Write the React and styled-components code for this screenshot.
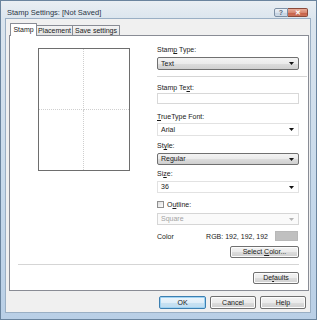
import React from 'react'
import styled, {createGlobalStyle} from "styled-components";

const Global = createGlobalStyle`
    html, body {
        margin: 0;
        padding: 0;
        background: #ffffff;
    }
    * {
        box-sizing: border-box;
    }
`;

const Window = styled.div`
    width: 317px;
    height: 320px;
    display: flex;
    flex-direction: column;
    padding: 0 5px 6px 4px;
    border: 1px solid #6a849e;
    background: linear-gradient(to bottom, #e9eef3 0, #dbe5ee 18px, #c6d9eb 60%, #b9cfe6 100%);
    font-family: "Liberation Sans", Arial, sans-serif;
    font-size: 7px;
    color: #1a1a1a;
`;

const TitleBar = styled.div`
    height: 17px;
    flex-shrink: 0;
    display: flex;
    justify-content: space-between;
    align-items: flex-start;
`;

const Title = styled.span`
    margin: 7px 0 0 2px;
    font-size: 7.5px;
    line-height: 9px;
    color: #2a3646;
`;

const CaptionButtons = styled.div`
    display: flex;
    margin: 7px 3px 0 0;
`;

const CaptionButton = styled.div`
    width: ${p => p.$w}px;
    height: 9px;
    display: flex;
    align-items: center;
    justify-content: center;
    border: 1px solid ${p => p.$close ? '#8a4a3a' : '#7d90a5'};
    border-radius: ${p => p.$close ? '0 2px 2px 0' : '2px 0 0 2px'};
    background: ${p => p.$close
        ? 'linear-gradient(to bottom, #e9ad9b 0, #d88a73 50%, #c76048 51%, #cc735a 100%)'
        : 'linear-gradient(to bottom, #edf2f7 0, #dbe4ee 50%, #c4d2e1 51%, #cfdbe8 100%)'};
    color: ${p => p.$close ? '#ffffff' : '#56687c'};
    font-size: 7px;
    font-weight: bold;
    line-height: 1;
    & + & {
        border-left: none;
    }
`;

const Client = styled.div`
    flex: 1;
    display: flex;
    flex-direction: column;
    padding: 4px 1px 0 3px;
    background: #f0f0f0;
    border: 1px solid #9aafc4;
`;

const TabRow = styled.div`
    height: 12px;
    display: flex;
    align-items: flex-end;
    padding-left: 1px;
    flex-shrink: 0;
`;

const Tab = styled.div`
    width: ${p => p.$w}px;
    height: ${p => p.$active ? 13 : 10}px;
    margin-bottom: ${p => p.$active ? -1 : 0}px;
    position: relative;
    z-index: ${p => p.$active ? 1 : 0};
    display: flex;
    align-items: center;
    justify-content: center;
    border: 1px solid #898c95;
    border-bottom: none;
    border-radius: 1px 1px 0 0;
    background: ${p => p.$active ? '#ffffff' : 'linear-gradient(to bottom, #f4f4f4, #e4e4e4)'};
    line-height: 8px;
    white-space: nowrap;
    & + & {
        margin-left: ${p => p.$active ? 0 : -1}px;
    }
`;

const Panel = styled.div`
    height: 256px;
    flex-shrink: 0;
    display: flex;
    flex-direction: column;
    padding: 9px 9px 5px 8px;
    background: #ffffff;
    border: 1px solid #898c95;
`;

const TopRow = styled.div`
    display: flex;
`;

const PreviewCol = styled.div`
    width: 139px;
    flex-shrink: 0;
`;

const Preview = styled.div`
    width: 92px;
    height: 123px;
    margin: 3px 0 0 20px;
    border: 1px solid #6e6e6e;
    display: grid;
    grid-template-columns: 1fr 1fr;
    grid-template-rows: 1fr 1fr;
`;

const Quarter = styled.div`
    border-right: ${p => p.$right ? '1px dotted #cfcfcf' : 'none'};
    border-bottom: ${p => p.$bottom ? '1px dotted #cfcfcf' : 'none'};
`;

const FormCol = styled.div`
    width: 142px;
    display: flex;
    flex-direction: column;
`;

const Label = styled.div`
    height: 9px;
    line-height: 9px;
    margin-top: ${p => p.$mt || 0}px;
    white-space: nowrap;
`;

const Select = styled.div`
    height: ${p => p.$h || 12}px;
    margin-top: ${p => p.$mt || 0}px;
    display: flex;
    align-items: center;
    justify-content: space-between;
    padding: 0 4px 0 3px;
    border: 1px solid ${p => p.$variant === 'button' ? '#707070' : p.$variant === 'disabled' ? '#d6d6d6' : '#e2e2e2'};
    border-radius: ${p => p.$variant === 'button' ? 2 : 0}px;
    background: ${p => p.$variant === 'button'
        ? 'linear-gradient(to bottom, #f3f3f3 0, #ebebeb 50%, #dddddd 51%, #cfcfcf 100%)'
        : p.$variant === 'disabled' ? '#fafafa' : '#ffffff'};
    color: ${p => p.$variant === 'disabled' ? '#a3a3a3' : '#1a1a1a'};
    line-height: 8px;
`;

const Arrow = ({color}) => (
    <svg width="5" height="3" viewBox="0 0 5 3">
        <polygon points="0,0 5,0 2.5,3" fill={color || '#111'}/>
    </svg>
);

const TextBox = styled.div`
    height: 11px;
    margin-top: ${p => p.$mt || 0}px;
    border: 1px solid #d8d8d8;
    background: #ffffff;
`;

const Separator = styled.div`
    height: 1px;
    margin-top: ${p => p.$mt || 0}px;
    margin-right: ${p => p.$mr || 0}px;
    background: #d5d5d5;
`;

const CheckRow = styled.div`
    height: 9px;
    margin-top: ${p => p.$mt || 0}px;
    display: flex;
    align-items: center;
    gap: 3px;
    line-height: 9px;
`;

const Checkbox = styled.div`
    width: 7px;
    height: 7px;
    border: 1px solid #8f8f8f;
    background: linear-gradient(135deg, #dcdcdc, #ffffff);
`;

const ColorRow = styled.div`
    height: 10px;
    margin-top: ${p => p.$mt || 0}px;
    display: flex;
    align-items: center;
    line-height: 9px;
`;

const ColorValue = styled.span`
    margin-left: auto;
    margin-right: 7px;
`;

const Swatch = styled.div`
    width: 23px;
    height: 10px;
    margin-right: 1px;
    background: rgb(192, 192, 192);
    border: 1px solid #b8b8b8;
`;

const PushButton = styled.div`
    width: ${p => p.$w}px;
    height: ${p => p.$h || 12}px;
    margin-top: ${p => p.$mt || 0}px;
    align-self: ${p => p.$end ? 'flex-end' : 'auto'};
    display: flex;
    align-items: center;
    justify-content: center;
    border: 1px solid ${p => p.$default ? '#3c7fb1' : '#707070'};
    border-radius: 2px;
    background: ${p => p.$default
        ? 'linear-gradient(to bottom, #edf5fb 0, #e0eef8 50%, #c8e2f3 51%, #bfdcef 100%)'
        : 'linear-gradient(to bottom, #f3f3f3 0, #ebebeb 50%, #dddddd 51%, #cfcfcf 100%)'};
    box-shadow: ${p => p.$default ? 'inset 0 0 0 1px #9fd3f3' : 'inset 0 0 0 1px #fcfcfc'};
    line-height: 8px;
    white-space: pre;
`;

const BottomRow = styled.div`
    display: flex;
    flex-direction: column;
`;

const Footer = styled.div`
    display: flex;
    justify-content: flex-end;
    gap: 4px;
    margin-top: 5px;
    padding-right: 3px;
`;

const App = () => {
    return <>
        <Global/>
        <Window>
            <TitleBar>
                <Title>Stamp Settings: [Not Saved]</Title>
                <CaptionButtons>
                    <CaptionButton $w={14}>?</CaptionButton>
                    <CaptionButton $w={20} $close>✕</CaptionButton>
                </CaptionButtons>
            </TitleBar>
            <Client>
                <TabRow>
                    <Tab $w={27} $active>Stamp</Tab>
                    <Tab $w={37}>Placement</Tab>
                    <Tab $w={48}>Save settings</Tab>
                </TabRow>
                <Panel>
                    <TopRow>
                        <PreviewCol>
                            <Preview>
                                <Quarter $right $bottom/>
                                <Quarter $bottom/>
                                <Quarter $right/>
                                <Quarter/>
                            </Preview>
                        </PreviewCol>
                        <FormCol>
                            <Label>Stam<u>p</u> Type:</Label>
                            <Select $variant="button" $h={13} $mt={3}>Text<Arrow/></Select>
                            <Separator $mt={6} $mr={-8}/>
                            <Label $mt={6}>Stamp Te<u>x</u>t:</Label>
                            <TextBox $mt={1}/>
                            <Label $mt={8}><u>T</u>rueType Font:</Label>
                            <Select $h={13} $mt={2}>Arial<Arrow/></Select>
                            <Label $mt={5}>St<u>y</u>le:</Label>
                            <Select $variant="button" $mt={3}>Regular<Arrow/></Select>
                            <Label $mt={4}>Si<u>z</u>e:</Label>
                            <Select $mt={3}>36<Arrow/></Select>
                            <CheckRow $mt={7}>
                                <Checkbox/>
                                <span>O<u>u</u>tline:</span>
                            </CheckRow>
                            <Select $variant="disabled" $mt={4}>Square<Arrow color="#b5b5b5"/></Select>
                            <ColorRow $mt={6}>
                                <span>Color</span>
                                <ColorValue>RGB: 192, 192, 192</ColorValue>
                                <Swatch/>
                            </ColorRow>
                            <PushButton $w={69} $mt={5} $end>{'Select '}<u>C</u>olor...</PushButton>
                        </FormCol>
                    </TopRow>
                    <BottomRow>
                        <Separator $mt={6}/>
                        <PushButton $w={46} $mt={7} $end>De<u>f</u>aults</PushButton>
                    </BottomRow>
                </Panel>
                <Footer>
                    <PushButton $w={47} $h={13} $default>OK</PushButton>
                    <PushButton $w={46} $h={13}>Cancel</PushButton>
                    <PushButton $w={46} $h={13}>Help</PushButton>
                </Footer>
            </Client>
        </Window>
    </>
};

export default App;
